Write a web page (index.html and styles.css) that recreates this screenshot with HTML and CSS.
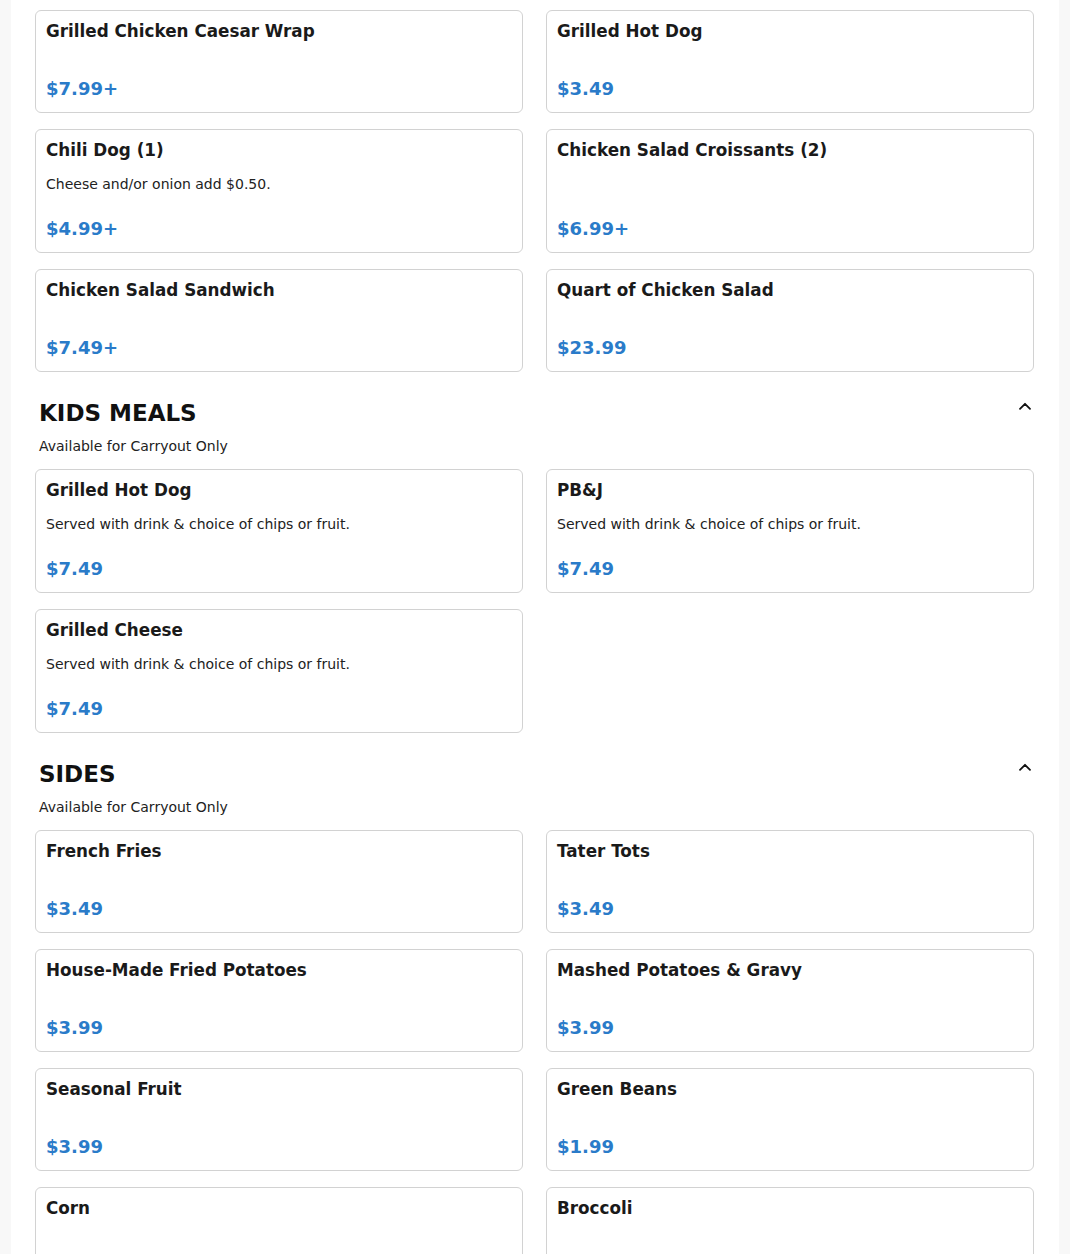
FILE: index.html
```html
<!DOCTYPE html>
<html lang="en">
<head>
<meta charset="utf-8">
<title>Menu</title>
<link rel="stylesheet" href="styles.css">
</head>
<body>
<main class="menu">
  <div class="grid">
    <div class="card"><div class="card-title">Grilled Chicken Caesar Wrap</div><div class="price">$7.99+</div></div>
    <div class="card"><div class="card-title">Grilled Hot Dog</div><div class="price">$3.49</div></div>
    <div class="card"><div class="card-title">Chili Dog (1)</div><div class="desc">Cheese and/or onion add $0.50.</div><div class="price">$4.99+</div></div>
    <div class="card"><div class="card-title">Chicken Salad Croissants (2)</div><div class="desc"></div><div class="price">$6.99+</div></div>
    <div class="card"><div class="card-title">Chicken Salad Sandwich</div><div class="price">$7.49+</div></div>
    <div class="card"><div class="card-title">Quart of Chicken Salad</div><div class="price">$23.99</div></div>
  </div>

  <section class="section">
    <div class="section-head">
      <h2 class="section-title">KIDS MEALS</h2>
      <svg class="chevron" width="12" height="8" viewBox="0 0 12 8"><path d="M1 6.8 L6 1.8 L11 6.8" fill="none" stroke="#111" stroke-width="1.8" stroke-linecap="round" stroke-linejoin="round"/></svg>
    </div>
    <p class="section-note">Available for Carryout Only</p>
    <div class="grid">
      <div class="card"><div class="card-title">Grilled Hot Dog</div><div class="desc">Served with drink &amp; choice of chips or fruit.</div><div class="price">$7.49</div></div>
      <div class="card"><div class="card-title">PB&amp;J</div><div class="desc">Served with drink &amp; choice of chips or fruit.</div><div class="price">$7.49</div></div>
      <div class="card"><div class="card-title">Grilled Cheese</div><div class="desc">Served with drink &amp; choice of chips or fruit.</div><div class="price">$7.49</div></div>
    </div>
  </section>

  <section class="section">
    <div class="section-head">
      <h2 class="section-title">SIDES</h2>
      <svg class="chevron" width="12" height="8" viewBox="0 0 12 8"><path d="M1 6.8 L6 1.8 L11 6.8" fill="none" stroke="#111" stroke-width="1.8" stroke-linecap="round" stroke-linejoin="round"/></svg>
    </div>
    <p class="section-note">Available for Carryout Only</p>
    <div class="grid">
      <div class="card"><div class="card-title">French Fries</div><div class="price">$3.49</div></div>
      <div class="card"><div class="card-title">Tater Tots</div><div class="price">$3.49</div></div>
      <div class="card"><div class="card-title">House-Made Fried Potatoes</div><div class="price">$3.99</div></div>
      <div class="card"><div class="card-title">Mashed Potatoes &amp; Gravy</div><div class="price">$3.99</div></div>
      <div class="card"><div class="card-title">Seasonal Fruit</div><div class="price">$3.99</div></div>
      <div class="card"><div class="card-title">Green Beans</div><div class="price">$1.99</div></div>
      <div class="card"><div class="card-title">Corn</div><div class="price">$1.99</div></div>
      <div class="card"><div class="card-title">Broccoli</div><div class="price">$1.99</div></div>
    </div>
  </section>
</main>
</body>
</html>
```
FILE: styles.css
```css
html, body {
  margin: 0;
  padding: 0;
}
body {
  background: #f8f8f8;
  font-family: "DejaVu Sans", sans-serif;
  color: #1c1c1c;
}
.menu {
  width: 1048px;
  margin: 0 auto;
  background: #ffffff;
  padding: 10px 25px 40px 24px;
  box-sizing: border-box;
  min-height: 1300px;
}
.grid {
  display: grid;
  grid-template-columns: 488px 488px;
  column-gap: 23px;
  row-gap: 16px;
}
.card {
  display: flex;
  flex-direction: column;
  border: 1px solid #d2d2d2;
  border-radius: 6px;
  padding: 10px 10px 13px;
  background: #fff;
}
.card-title {
  font-size: 16.8px;
  font-weight: bold;
  line-height: 21px;
  color: #1a1a1a;
}
.desc {
  margin-top: 13px;
  min-height: 21px;
  font-size: 14px;
  line-height: 21px;
  color: #222;
}
.price {
  margin-top: 36px;
  font-size: 18px;
  font-weight: bold;
  line-height: 21px;
  color: #2a7bc9;
}
.desc + .price {
  margin-top: 23px;
}
.section {
  margin-top: 28px;
}
.section-head {
  display: flex;
  justify-content: space-between;
  align-items: flex-start;
  padding-left: 4px;
}
.section-title {
  margin: 0;
  font-size: 23px;
  line-height: 27px;
  font-weight: bold;
  color: #111;
}
.chevron {
  margin-top: 2px;
  margin-right: 3px;
}
.section-note {
  margin: 11px 0 15px;
  padding-left: 4px;
  font-size: 14px;
  line-height: 16px;
  color: #222;
}
```
